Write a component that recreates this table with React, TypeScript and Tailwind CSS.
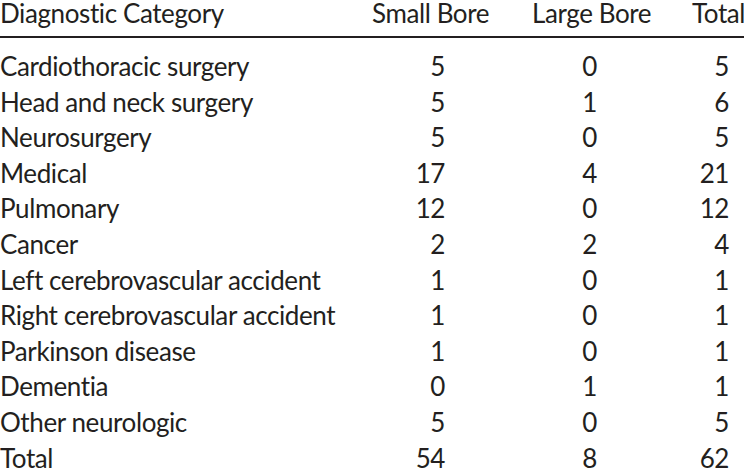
const rows: [string, number, number, number][] = [
  ['Cardiothoracic surgery', 5, 0, 5],
  ['Head and neck surgery', 5, 1, 6],
  ['Neurosurgery', 5, 0, 5],
  ['Medical', 17, 4, 21],
  ['Pulmonary', 12, 0, 12],
  ['Cancer', 2, 2, 4],
  ['Left cerebrovascular accident', 1, 0, 1],
  ['Right cerebrovascular accident', 1, 0, 1],
  ['Parkinson disease', 1, 0, 1],
  ['Dementia', 0, 1, 1],
  ['Other neurologic', 5, 0, 5],
  ['Total', 54, 8, 62],
]

export default function App() {
  return (
    <div className="w-[744px] h-[475px] overflow-hidden bg-white text-[#231f20] font-['Lato',sans-serif] text-[26px] tracking-[-0.4px] tabular-nums">
      <div className="grid grid-cols-[372px_160px_160px_52px] h-[38px] border-b-2 border-[#231f20] leading-[26px]">
        <div className="whitespace-nowrap">Diagnostic Category</div>
        <div className="whitespace-nowrap">Small Bore</div>
        <div className="whitespace-nowrap">Large Bore</div>
        <div className="text-right whitespace-nowrap">Total</div>
      </div>
      <div className="pt-[11px]">
        {rows.map(([label, small, large, total]) => (
          <div key={label} className="grid grid-cols-[372px_160px_160px_52px] h-[35.6px] leading-[35.6px]">
            <div className="whitespace-nowrap">{label}</div>
            <div className="text-right pr-[87px]">{small}</div>
            <div className="text-right pr-[95px]">{large}</div>
            <div className="text-right pr-[15px]">{total}</div>
          </div>
        ))}
      </div>
    </div>
  )
}
